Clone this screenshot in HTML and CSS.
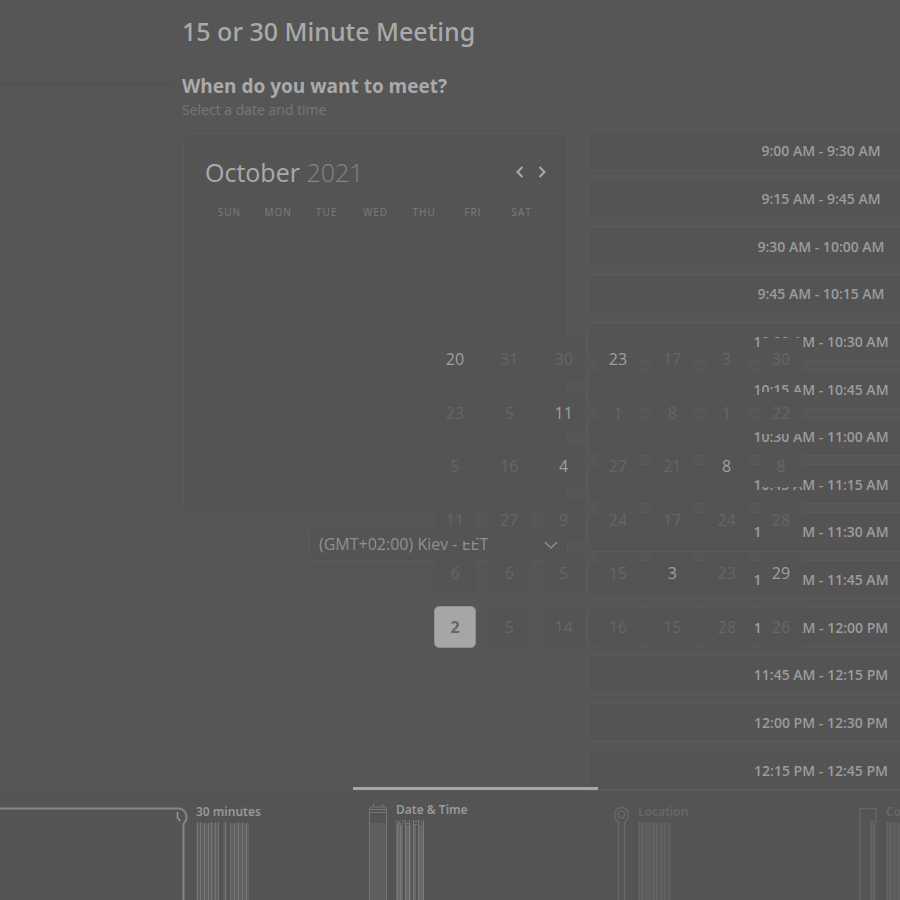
FILE: index.html
```
<!DOCTYPE html>
<html lang="en">
<head>
<meta charset="utf-8">
<title>15 or 30 Minute Meeting</title>
<meta name="viewport" content="width=device-width, initial-scale=1">
<link rel="stylesheet" href="styles.css">
</head>
<body>
<header class="top">
  <h1>15 or 30 Minute Meeting</h1>
</header>
<main class="main">
  <div class="intro">
    <div class="rule"></div>
    <div>
      <h2>When do you want to meet?</h2>
      <p>Select a date and time</p>
    </div>
  </div>
  <div class="booking">
    <div class="left">
      <section class="calendar">
        <div class="month">
          <h3>October <span>2021</span></h3>
          <div class="nav">
            <button type="button" aria-label="Previous month"><svg width="10" height="14" viewBox="0 0 10 14"><path d="M7.500 2 2.500 7l5 5"/></svg></button>
            <button type="button" aria-label="Next month"><svg width="10" height="14" viewBox="0 0 10 14"><path d="m2.500 2 5 5-5 5"/></svg></button>
          </div>
        </div>
        <div class="weekdays"><span>SUN</span><span>MON</span><span>TUE</span><span>WED</span><span>THU</span><span>FRI</span><span>SAT</span></div>
      </section>
      <div class="zone">
        <select aria-label="Time zone"><option>(GMT+02:00) Kiev - EET</option></select>
        <svg width="14" height="10" viewBox="0 0 14 10"><path d="m1 2 6 6 6-6"/></svg>
      </div>
    </div>
    <div class="slots">
      <button type="button">9:00 AM - 9:30 AM</button>
      <button type="button">9:15 AM - 9:45 AM</button>
      <button type="button">9:30 AM - 10:00 AM</button>
      <button type="button">9:45 AM - 10:15 AM</button>
      <button type="button">10:00 AM - 10:30 AM</button>
      <button type="button">10:15 AM - 10:45 AM</button>
      <button type="button">10:30 AM - 11:00 AM</button>
      <button type="button">10:45 AM - 11:15 AM</button>
      <button type="button">11:00 AM - 11:30 AM</button>
      <button type="button">11:15 AM - 11:45 AM</button>
      <button type="button">11:30 AM - 12:00 PM</button>
      <button type="button">11:45 AM - 12:15 PM</button>
      <button type="button">12:00 PM - 12:30 PM</button>
      <button type="button">12:15 PM - 12:45 PM</button>
    </div>
    <div class="days">
      <button type="button" class="open">20</button><button type="button">31</button><button type="button">30</button><button type="button" class="open">23</button><button type="button">17</button><button type="button">3</button><button type="button">30</button>
      <button type="button">23</button><button type="button">5</button><button type="button" class="open">11</button><button type="button">1</button><button type="button">8</button><button type="button">1</button><button type="button">22</button>
      <button type="button">5</button><button type="button">16</button><button type="button" class="open">4</button><button type="button">27</button><button type="button">21</button><button type="button" class="open">8</button><button type="button">8</button>
      <button type="button">11</button><button type="button">27</button><button type="button">9</button><button type="button">24</button><button type="button">17</button><button type="button">24</button><button type="button">28</button>
      <button type="button">6</button><button type="button">6</button><button type="button">5</button><button type="button">15</button><button type="button" class="open">3</button><button type="button">23</button><button type="button" class="open">29</button>
      <button type="button" class="chosen">2</button><button type="button">5</button><button type="button">14</button><button type="button">16</button><button type="button">15</button><button type="button">28</button><button type="button">26</button>
    </div>
  </div>
</main>
<footer class="steps">
  <div class="step done">
    <svg class="icon" width="188" height="94" viewBox="0 0 188 94" fill="none">
      <path d="M0 2.500h178a8.500 8.500 0 0 1 6 14.500M183.500 17v78" stroke="#868686" stroke-width="2"/>
      <path d="M177.500 6v6l3 3" stroke="#999" stroke-width="1.500"/>
    </svg>
    <div class="label"><b>30 minutes</b>
      <svg width="56" height="78" viewBox="0 0 56 78"><path fill="#606060" d="M0 1h23v79H0zM27 1h4v79h-4zM34 1h19v79H34z"/><path stroke="#757575" d="M1.500 0v80M4.500 0v80M8.500 1v79M12.500 1v79M15.500 0v80M19.500 0v80M22.500 0v80M29.500 0v80M34.500 1v79M38.500 1v79M42.500 0v80M46.500 0v80M50.500 1v79"/></svg>
    </div>
  </div>
  <div class="step active">
    <svg class="icon" width="18" height="96" viewBox="0 0 18 96" fill="none">
      <path fill="#5e5e5e" d="M1 19h16v77H1z"/>
      <path d="M.500 96V5q0-2 2-2h13q2 0 2 2v91M1 5.500h16M1 8.500h16M4.500 0v3M13.500 0v3" stroke="#777"/>
    </svg>
    <div class="label"><b>Date &amp; Time</b>
      <svg width="30" height="80" viewBox="0 0 30 80"><path fill="#686868" d="M0 5h7v77H0zM9 5h6v77H9zM17 5h3v77h-3zM22 5h6v77h-6z"/><path fill="none" stroke="#797979" d="m.500 0 1 5v77M3.500 1l-1 4M3.500 1l1 4v77M7.500 0l-1 5M9.500 0v82M13.500 0v82M9 3.500h5M17.500 0v82M17 1.500h4M17 4.500h4M22.500 82V0l5 5M27.500 0v82"/></svg>
    </div>
  </div>
  <div class="step later">
    <svg class="icon" width="15" height="94" viewBox="1 0 15 94" fill="none">
      <path d="M5.500 95V17C3 14 1.500 12 1.500 8.500a7 7 0 0 1 14 0c0 3.500-1.500 5.500-4 8.500v78" stroke="#686868" stroke-width="1.500"/>
      <circle cx="8.500" cy="8.500" r="3.500" stroke="#686868" stroke-width="1.500"/>
    </svg>
    <div class="label"><b>Location</b>
      <svg width="34" height="78" viewBox="0 0 34 78"><path fill="#5b5b5b" d="M0 1h33v79H0z"/><path stroke="#656565" d="M1.500 0v80M4.500 0v80M8.500 0v80M11.500 0v80M15.500 0v80M18.500 1v79M23.500 0v80M26.500 0v80M31.500 1v79"/></svg>
    </div>
  </div>
  <div class="step later">
    <svg class="icon" width="18" height="94" viewBox="0 0 18 94" fill="none">
      <path fill="#5e5e5e" d="M12 17h4v78h-4z"/>
      <path d="M1 95V2.500h16v13h-5V95M15.500 17v78" stroke="#666" stroke-width="1.500"/>
    </svg>
    <div class="label"><b>Confirmation</b>
      <svg width="34" height="78" viewBox="0 0 34 78"><path fill="#5b5b5b" d="M0 1h33v79H0z"/><path stroke="#656565" d="M1.500 0v80M4.500 0v80M8.500 0v80M12.500 0v80M15.500 0v80M19.500 0v80M23.500 0v80"/></svg>
    </div>
  </div>
</footer>
</body>
</html>
```
FILE: styles.css
```
* {
  box-sizing: border-box;
}

body {
  display: flex;
  flex-direction: column;
  height: 100vh;
  min-height: 860px;
  margin: 0;
  overflow: hidden;
  background: #565656;
  color: #aaa;
  font-family: "Open Sans", "Noto Sans", sans-serif;
}

h1, h2, h3, p {
  margin: 0;
}

button {
  padding: 0;
  border: 0;
  background: none;
  color: inherit;
  font: inherit;
}

.top {
  padding: 14px 0 0 182px;
}

h1 {
  font-family: "Noto Sans", sans-serif;
  font-size: 25px;
  line-height: 34px;
  font-weight: 500;
}

.main {
  display: flex;
  flex: 1;
  flex-direction: column;
  min-height: 0;
}

.intro {
  display: flex;
  gap: 7px;
  padding-top: 26px;
}

.rule {
  width: 175px;
  height: 12px;
  margin-top: 4px;
  background: linear-gradient(#575757, #525252, #575757);
}

h2 {
  font-size: 19px;
  line-height: 24px;
  font-weight: 700;
}

.intro p {
  color: #777;
  font-size: 14px;
  line-height: 24px;
}

.booking {
  position: relative;
  display: flex;
  flex: 1;
  gap: 19px;
  min-height: 0;
  margin-top: 9px;
  padding-left: 183px;
}

.left {
  flex: 0 0 385px;
  padding-top: 2px;
}

.calendar {
  height: 381px;
  padding: 21px;
  border: 1px solid #5a5a5a;
  border-radius: 6px;
  background: #545454;
}

.month {
  display: flex;
  align-items: center;
  justify-content: space-between;
}

h3 {
  font-size: 25px;
  line-height: 34px;
  font-weight: 400;
}

h3 span {
  color: #858585;
  font-weight: 300;
}

.nav {
  display: flex;
  gap: 12px;
  margin-right: -1px;
}

.nav svg {
  display: block;
  fill: none;
  stroke: #aaa;
  stroke-width: 2;
}

.weekdays {
  display: grid;
  grid-template-columns: repeat(7, 1fr);
  margin-top: 15px;
  color: #7c7c7c;
  font-size: 10px;
  line-height: 16px;
  letter-spacing: 1px;
  text-align: center;
}

.zone {
  position: relative;
  width: 259px;
  margin: 12px 0 0 auto;
}

.zone select {
  display: block;
  width: 100%;
  height: 35px;
  padding: 0 9px;
  border: 1px solid #5b5b5b;
  border-radius: 5px;
  appearance: none;
  background: #545454;
  color: #909090;
  font: 16px "Open Sans", "Noto Sans", sans-serif;
}

.zone svg {
  position: absolute;
  top: 14px;
  right: 10px;
  fill: none;
  stroke: #8c8c8c;
  stroke-width: 1.5;
}

.slots {
  display: flex;
  flex: 0 0 468px;
  flex-direction: column;
  gap: 8px;
}

.slots button {
  flex: 1;
  border: 1px solid #5b5b5b;
  border-radius: 4px;
  background: #545454;
  color: #9c9c9c;
  font-size: 14px;
  font-weight: 600;
}

.days {
  position: absolute;
  top: 207px;
  left: 434px;
  display: grid;
  grid-template-columns: repeat(7, 42px);
  align-content: space-between;
  justify-content: space-between;
  width: 368px;
  height: 310px;
  pointer-events: none;
}

.days button {
  height: 42px;
  background: #545454;
  color: #666;
  font-size: 16px;
  pointer-events: auto;
}

.days .open {
  color: #a0a0a0;
}

.days .chosen {
  border: 1px solid #8f8f8f;
  border-radius: 5px;
  background: #a6a6a6;
  color: #666;
  font-weight: 700;
}

.steps {
  display: flex;
  flex: 0 0 109px;
  margin-top: 1px;
  background: #545454;
  box-shadow: 0 -1px #5a5a5a;
}

.step {
  position: relative;
  display: flex;
  flex: 0 0 245px;
  gap: 9px;
  padding: 15px 0 0 16px;
}

.done {
  flex-basis: 353px;
  gap: 8px;
  padding-left: 0;
}

.icon {
  flex: none;
}

.label {
  display: flex;
  flex-direction: column;
  margin-top: -4px;
  color: #999;
  font-family: "Noto Sans", sans-serif;
  font-size: 12px;
  line-height: 20px;
}

.label b {
  font-weight: 600;
}

.label svg {
  display: block;
}

.active {
  padding-top: 13px;
}

.active::before {
  content: "";
  position: absolute;
  top: -4px;
  left: 0;
  width: 100%;
  height: 3px;
  background: #a6a6a6;
}

.later .label {
  color: #686868;
}
```
